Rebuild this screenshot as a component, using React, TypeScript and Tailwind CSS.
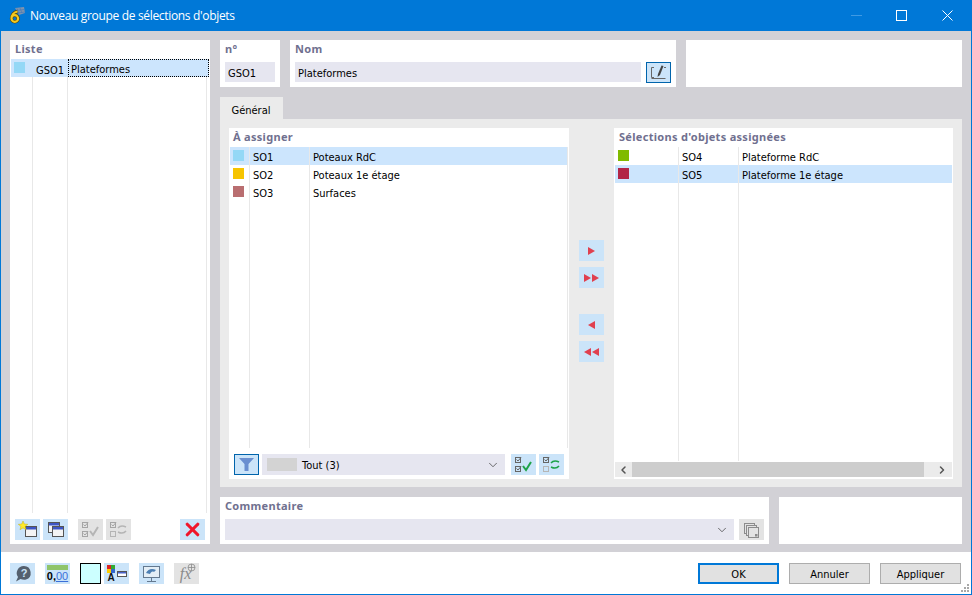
import { ReactNode } from "react";
import { ChevronDown, ChevronLeft, ChevronRight, X } from "lucide-react";

const labelClass = "text-[11px] leading-[13px] font-bold text-[#70708f] tracking-[0.3px] font-['Noto_Sans',sans-serif]";
const fieldClass = "bg-[#e6e6f0] h-5 flex items-center";

function IconBtn({ children, gray, focus }: { children: ReactNode; gray?: boolean; focus?: boolean }) {
  return (
    <div className={`w-[25px] h-[21px] shrink-0 flex items-center justify-center ${gray ? "bg-[#e3e3e3]" : "bg-[#cbe4f9]"} ${focus ? "border border-[#0064ac]" : ""}`}>
      {children}
    </div>
  );
}

function Checks({ swap, gray }: { swap?: boolean; gray?: boolean }) {
  const box = gray ? "#a5a5a5" : "#666";
  const accent = gray ? "#b5b5b5" : "#1fa34a";
  return (
    <svg width="19" height="17" viewBox="0 0 19 17" fill="none">
      <rect x="1.5" y="1.5" width="5" height="5" stroke={box} />
      <path d="M2.5 3.5l1.5 1.5 3-3.5" stroke={box} />
      <rect x="1.5" y="10.5" width="5" height="5" stroke={swap ? "#b5b5b5" : box} />
      {swap ? (
        <>
          <path d="M9 7c2-2.5 5-2.5 8-1" stroke={accent} strokeWidth="1.5" />
          <path d="M17 10c-2 2.5-5 2.5-8 1" stroke={accent} strokeWidth="1.5" />
        </>
      ) : (
        <>
          <path d="M2.5 12.5l1.5 1.5 3-3.5" stroke={box} />
          <path d="M9 10l3 4 5-8" stroke={accent} strokeWidth="2" />
        </>
      )}
    </svg>
  );
}

function Arrows({ dir, count }: { dir: "left" | "right"; count: number }) {
  const tri = dir === "right" ? "M0 0l7 4-7 4z" : "M7 0L0 4l7 4z";
  return (
    <div className="flex gap-[1px]">
      {Array.from({ length: count }).map((_, i) => (
        <svg key={i} width="7" height="8" viewBox="0 0 7 8">
          <path d={tri} fill="#e0404f" />
        </svg>
      ))}
    </div>
  );
}

function Row({ color, code, name, selected, wide, edge }: { color: string; code: string; name: string; selected?: boolean; wide?: boolean; edge?: boolean }) {
  return (
    <div className={`h-[18px] flex text-[11px] text-black ${selected ? "bg-[#cce5fd]" : ""}`}>
      <div className={`${wide ? "w-[64px]" : "w-[20px]"} pl-[3px] pt-[3px] shrink-0 border-r border-[#e8e8e8]`}>
        <div className="w-[11px] h-[11px]" style={{ backgroundColor: color }} />
      </div>
      <div className="w-[60px] pl-[3px] shrink-0 border-r border-[#e8e8e8] flex items-center pt-[5px]">{code}</div>
      <div className={`pl-[3px] whitespace-nowrap flex items-center pt-[5px] ${edge ? "w-[258px] border-r border-[#e8e8e8]" : ""}`}>{name}</div>
    </div>
  );
}

function ColumnLines({ left }: { left: string[] }) {
  return (
    <div className="flex-1 flex min-h-0">
      {left.map((w) => (
        <div key={w} className={`${w} border-r border-[#e8e8e8] shrink-0`} />
      ))}
    </div>
  );
}

export default function App() {
  return (
    <div className="w-[972px] h-[595px] flex flex-col bg-white border border-t-0 border-[#0078d7] overflow-hidden relative font-['DejaVu_Sans_Condensed','Noto_Sans',sans-serif]">
      <div className="h-[31px] shrink-0 bg-[#0078d7] flex items-center text-white">
        <svg className="ml-[7px] shrink-0" width="17" height="17" viewBox="0 0 17 17" fill="none">
          <path d="M7 1l9-1 1 6-6 2z" fill="#7f93ad" />
          <path d="M9 1.5l2 6M12 1l2 5M8 3.5l8-1M9 6l8-1" stroke="#3f78b8" strokeWidth="0.6" />
          <path d="M9.5 4.5C6 5 3.5 8 3.5 11.5a3.3 3.3 0 1 0 3.3-3.3c-1.4 0-2.6.8-3.1 2" stroke="#5a4708" strokeWidth="3.4" />
          <path d="M9.5 4.5C6 5 3.5 8 3.5 11.5a3.3 3.3 0 1 0 3.3-3.3c-1.4 0-2.6.8-3.1 2" stroke="#f5c91f" strokeWidth="2.2" />
        </svg>
        <div className="ml-[5px] text-[12px] font-['Open_Sans',sans-serif] tracking-[-0.33px] whitespace-nowrap">Nouveau groupe de sélections d'objets</div>
        <div className="ml-auto flex items-center">
          <svg width="11" height="1" viewBox="0 0 11 1"><rect width="11" height="1" fill="#3f9ae4" /></svg>
          <svg className="ml-[34px]" width="11" height="11" viewBox="0 0 11 11" fill="none"><rect x="0.5" y="0.5" width="10" height="10" stroke="#fff" /></svg>
          <svg className="ml-[35px] mr-[18px]" width="11" height="11" viewBox="0 0 11 11" fill="none"><path d="M0.5 0.5l10 10M10.5 0.5l-10 10" stroke="#fff" /></svg>
        </div>
      </div>

      <div className="h-[521px] shrink-0 bg-[#d2d1d6] flex pt-[9px] pb-[8px] pl-[9px] pr-[9px] gap-[10px]">
        {/* liste */}
        <div className="w-[200px] shrink-0 bg-white flex flex-col pl-[1px] pr-[1px]">
          <div className={`${labelClass} pl-[4px] pt-[2px] h-[19px]`}>Liste</div>
          <div className="h-[18px] flex items-center bg-[#cce5fd] text-[11px] text-black">
            <div className="w-[22px] pl-[3px] pb-[1px] shrink-0"><div className="w-[11px] h-[11px] bg-[#94d8f6]" /></div>
            <div className="w-[35px] pl-[3px] shrink-0 pt-[5px] leading-[13px]">GSO1</div>
            <div className="flex-1 h-full pl-[2px] pt-[4px] border border-dotted border-black flex items-center">Plateformes</div>
          </div>
          <ColumnLines left={["w-[22px]", "w-[35px]", "w-[139px]"]} />
          <div className="h-[31px] shrink-0 flex items-start pt-[6px] pl-[4px] pr-[4px]">
            <div className="flex gap-[3px]">
              <IconBtn>
                <svg width="20" height="17" viewBox="0 0 20 17">
                  <rect x="7.5" y="5.5" width="11" height="10" fill="#f4f4f4" stroke="#555" />
                  <rect x="8" y="6" width="10" height="2.5" fill="#3d55c4" />
                  <path d="M5 0l1.4 3 3.4.3-2.6 2.1.9 3.3L5 6.9 2 8.7l.9-3.3L.3 3.3 3.7 3z" fill="#ffe92b" stroke="#b9a400" strokeWidth="0.4" />
                </svg>
              </IconBtn>
              <IconBtn>
                <svg width="18" height="17" viewBox="0 0 18 17">
                  <rect x="1.5" y="1.5" width="11" height="10" fill="#f4f4f4" stroke="#555" />
                  <rect x="2" y="2" width="10" height="2.5" fill="#3d55c4" />
                  <rect x="5.5" y="5.5" width="11" height="10" fill="#f4f4f4" stroke="#555" />
                  <rect x="6" y="6" width="10" height="2.5" fill="#3d55c4" />
                </svg>
              </IconBtn>
            </div>
            <div className="flex gap-[3px] ml-[10px]">
              <IconBtn gray><Checks gray /></IconBtn>
              <IconBtn gray><Checks swap gray /></IconBtn>
            </div>
            <div className="ml-auto">
              <IconBtn>
                <X size={21} strokeWidth={3.6} className="text-[#f0162b]" />
              </IconBtn>
            </div>
          </div>
        </div>

        {/* droite */}
        <div className="flex-1 flex flex-col min-w-0">
          <div className="h-[47px] shrink-0 flex gap-[10px]">
            <div className="w-[60px] bg-white px-[5px] pt-[2px]">
              <div className={`${labelClass} h-[20px]`}>n°</div>
              <div className={`${fieldClass} text-[11px] pl-[3px] pt-[5px] text-black`}>GSO1</div>
            </div>
            <div className="w-[386px] bg-white px-[5px] pt-[2px]">
              <div className={`${labelClass} h-[20px]`}>Nom</div>
              <div className="flex gap-[5px]">
                <div className={`${fieldClass} flex-1 text-[11px] pl-[3px] pt-[5px] text-black`}>Plateformes</div>
                <IconBtn focus>
                  <svg width="17" height="15" viewBox="0 0 17 15" fill="none">
                    <path d="M4 2.5H1.5v10H4M1.500 13.500h14M14 2.500h2" stroke="#666" />
                    <path d="M11.500 0.500L8 9l-.5 3L10 10l3.500-9z" fill="#444" />
                  </svg>
                </IconBtn>
              </div>
            </div>
            <div className="flex-1 bg-white" />
          </div>

          <div className="h-[22px] mt-[10px] shrink-0 flex">
            <div className="w-[63px] pr-[1px] bg-[#ebebeb] text-[11px] text-black flex items-center justify-center pt-[6px]">Général</div>
          </div>

          <div className="h-[368px] shrink-0 bg-[#ebebeb] flex p-[9px] pb-[8px]">
            <div className="w-[340px] shrink-0 bg-white flex flex-col pt-[2px] px-[1px]">
              <div className={`${labelClass} pl-[3px] h-[17px]`}>À assigner</div>
              <Row color="#94d8f6" code="SO1" name="Poteaux RdC" selected edge />
              <Row color="#f6c400" code="SO2" name="Poteaux 1e étage" edge />
              <Row color="#b96e70" code="SO3" name="Surfaces" edge />
              <ColumnLines left={["w-[20px]", "w-[60px]", "w-[258px]"]} />
              <div className="h-[31px] shrink-0 flex items-start pt-[6px] pl-[4px]">
                <IconBtn focus>
                  <svg width="15" height="13" viewBox="0 0 15 13">
                    <path d="M0 0h15L9.5 6v7h-4V6z" fill="#6a8fd0" />
                  </svg>
                </IconBtn>
                <div className={`${fieldClass} ml-[3px] w-[243px] !h-[21px] text-[11px] text-black`}>
                  <div className="w-[30px] h-[13px] ml-[5px] bg-[#d3d3d3]" />
                  <div className="ml-[5px] pt-[4px]">Tout (3)</div>
                  <ChevronDown size={14} strokeWidth={1.2} className="ml-auto mr-[5px] text-[#333]" />
                </div>
                <div className="flex gap-[3px] ml-[6px]">
                  <IconBtn><Checks /></IconBtn>
                  <IconBtn><Checks swap /></IconBtn>
                </div>
              </div>
            </div>

            <div className="w-[45px] shrink-0 flex flex-col items-center pt-[112px]">
              <IconBtn><Arrows dir="right" count={1} /></IconBtn>
              <div className="mt-[6px]"><IconBtn><Arrows dir="right" count={2} /></IconBtn></div>
              <div className="mt-[26px]"><IconBtn><Arrows dir="left" count={1} /></IconBtn></div>
              <div className="mt-[6px]"><IconBtn><Arrows dir="left" count={2} /></IconBtn></div>
            </div>

            <div className="w-[339px] shrink-0 bg-white flex flex-col pt-[2px] px-[1px] pb-[2px]">
              <div className={`${labelClass} pl-[4px] h-[17px]`}>Sélections d'objets assignées</div>
              <Row color="#80bb00" code="SO4" name="Plateforme RdC" wide />
              <Row color="#b22546" code="SO5" name="Plateforme 1e étage" wide selected />
              <ColumnLines left={["w-[64px]", "w-[60px]"]} />
              <div className="h-[15px] mt-[1px] shrink-0 flex items-center bg-[#ebebeb]">
                <ChevronLeft size={12} strokeWidth={3} className="text-[#555] w-[17px] shrink-0" />
                <div className="flex-1 h-full bg-[#cdcdcd]" />
                <div className="w-[28px] shrink-0 flex justify-end pr-[4px]">
                  <ChevronRight size={12} strokeWidth={3} className="text-[#555]" />
                </div>
              </div>
            </div>
          </div>

          <div className="h-[47px] mt-[10px] shrink-0 flex gap-[10px]">
            <div className="w-[549px] bg-white px-[5px] pt-[2px]">
              <div className={`${labelClass} h-[20px]`}>Commentaire</div>
              <div className="flex gap-[5px]">
                <div className={`${fieldClass} flex-1 !h-[21px]`}>
                  <ChevronDown size={14} strokeWidth={1.2} className="ml-auto mr-[5px] text-[#333]" />
                </div>
                <IconBtn gray>
                  <svg width="17" height="16" viewBox="0 0 17 16" fill="none" stroke="#8c8c8c">
                    <rect x="1.5" y="1.5" width="10" height="10" />
                    <rect x="3.5" y="3.5" width="10" height="10" fill="#e3e3e3" />
                    <rect x="5.5" y="5.5" width="10" height="10" fill="#e3e3e3" />
                    <rect x="12" y="12" width="2.5" height="2.5" fill="#8c8c8c" stroke="none" />
                  </svg>
                </IconBtn>
              </div>
            </div>
            <div className="flex-1 bg-white" />
          </div>
        </div>
      </div>

      <div className="flex-1 flex items-start pt-[11px] pl-[9px] pr-[10px] bg-white">
        <IconBtn>
          <svg width="19" height="17" viewBox="0 0 19 17">
            <path d="M11 1a7 7 0 0 1 2 13.6c-2 .6-4-.1-5.500-.6L3 16.500l2-4.500A7 7 0 0 1 11 1z" fill="#55606e" />
            <text x="11" y="12" fontSize="11" fontWeight="700" fill="#cbe4f9" textAnchor="middle" fontFamily="Liberation Sans">?</text>
          </svg>
        </IconBtn>
        <div className="ml-[10px]">
          <IconBtn>
            <div className="flex flex-col items-center leading-none">
              <div className="w-[21px] h-[5px] bg-[#8fc46a]" />
              <div className="text-[11px] font-bold leading-[13px] text-black font-['Liberation_Sans',sans-serif]">0,<span className="text-[#3a6fd8] font-normal underline">00</span></div>
            </div>
          </IconBtn>
        </div>
        <div className="ml-[10px] w-[21px] h-[21px] bg-[#ccffff] border border-black shrink-0" />
        <div className="ml-[3px]">
          <IconBtn>
            <svg width="21" height="19" viewBox="0 0 21 19">
              <rect x="1" y="1" width="4" height="4" fill="#d22" />
              <rect x="5" y="1" width="4" height="4" fill="#3a3" />
              <rect x="1" y="5" width="4" height="4" fill="#fc0" />
              <rect x="5" y="5" width="4" height="4" fill="#36c" />
              <text x="5" y="17" fontSize="10" fontWeight="700" fill="#111" textAnchor="middle" fontFamily="Liberation Sans">A</text>
              <rect x="11.500" y="7.500" width="9" height="5" fill="#fff" stroke="#555" />
              <rect x="12" y="8" width="8" height="1.500" fill="#4a63c9" />
            </svg>
          </IconBtn>
        </div>
        <div className="ml-[10px]">
          <IconBtn>
            <svg width="19" height="18" viewBox="0 0 19 18" fill="none">
              <rect x="1.500" y="1.500" width="16" height="11" fill="#e4eef6" stroke="#64798f" />
              <path d="M4 8c2-4 6-5 10-3l-2 2c-2-1-3 0-4 2z" fill="#4c7fb3" />
              <path d="M9.500 13v3M5 16.500h9" stroke="#64798f" />
            </svg>
          </IconBtn>
        </div>
        <div className="ml-[10px]">
          <IconBtn gray>
            <div className="relative font-['Liberation_Serif',serif] italic text-[16px] leading-none text-[#8a8a8a] pr-[2px]">
              fx
              <svg className="absolute -top-[3px] -right-[3px]" width="9" height="9" viewBox="0 0 9 9" fill="none" stroke="#8a8a8a" strokeWidth="0.8">
                <circle cx="4.500" cy="4.500" r="3.500" />
                <path d="M1 4.500h7M4.500 1v7" />
              </svg>
            </div>
          </IconBtn>
        </div>
        <div className="ml-auto flex gap-[10px]">
          <div className="w-[81px] h-[21px] bg-[#e1e1e1] border-2 border-[#0078d7] text-[11px] text-black flex items-center justify-center pt-[4px]">OK</div>
          <div className="w-[81px] h-[21px] bg-[#e1e1e1] border border-[#adadad] text-[11px] text-black flex items-center justify-center pt-[4px]">Annuler</div>
          <div className="w-[81px] h-[21px] bg-[#e1e1e1] border border-[#adadad] text-[11px] text-black flex items-center justify-center pt-[4px]">Appliquer</div>
        </div>
      </div>

      <svg className="absolute right-[1px] bottom-[1px]" width="10" height="10" viewBox="0 0 10 10" fill="#a8a8a8">
        <rect x="7" y="1" width="2" height="2" />
        <rect x="4" y="4" width="2" height="2" />
        <rect x="7" y="4" width="2" height="2" />
        <rect x="1" y="7" width="2" height="2" />
        <rect x="4" y="7" width="2" height="2" />
        <rect x="7" y="7" width="2" height="2" />
      </svg>
    </div>
  );
}
